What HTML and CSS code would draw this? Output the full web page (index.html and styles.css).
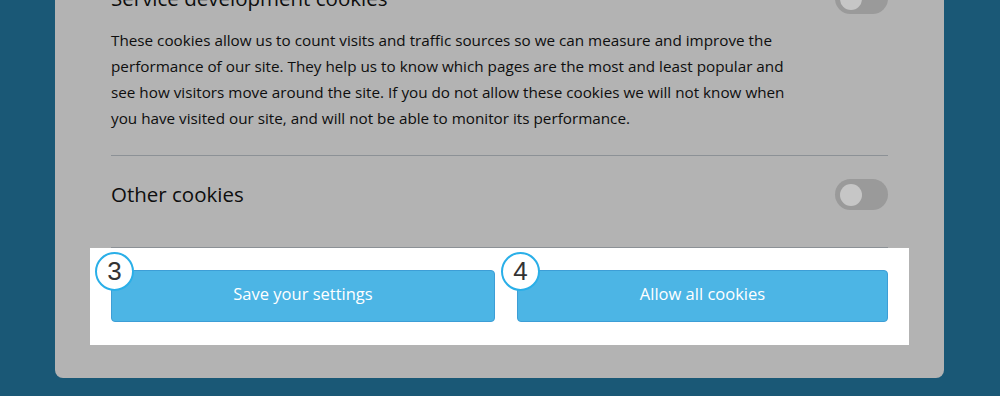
FILE: index.html
```html
<!DOCTYPE html>
<html lang="en">
<head>
<meta charset="utf-8">
<title>Cookie settings</title>
<link rel="stylesheet" href="styles.css">
</head>
<body>
<div class="panel">
  <section class="group">
    <div class="group-head">
      <h3 class="group-title">Service development cookies</h3>
      <span class="toggle"><span class="knob"></span></span>
    </div>
    <p class="group-text">These cookies allow us to count visits and traffic sources so we can measure and improve the performance of our site. They help us to know which pages are the most and least popular and see how visitors move around the site. If you do not allow these cookies we will not know when you have visited our site, and will not be able to monitor its performance.</p>
  </section>
  <section class="group group-last">
    <div class="group-head">
      <h3 class="group-title">Other cookies</h3>
      <span class="toggle"><span class="knob"></span></span>
    </div>
  </section>
  <div class="actions">
    <button class="btn btn-save"><span class="badge">3</span>Save your settings</button>
    <button class="btn btn-allow"><span class="badge">4</span>Allow all cookies</button>
  </div>
</div>
</body>
</html>
```
FILE: styles.css
```css
html, body {
  margin: 0;
  padding: 0;
}
body {
  background: #1a5876;
  width: 1000px;
  height: 396px;
  overflow: hidden;
  font-family: "Open Sans", Lato, sans-serif;
  color: #0e0e0e;
}
.panel {
  margin: -30px 0 0 55px;
  width: 889px;
  box-sizing: border-box;
  padding: 0 56px 33px;
  background: #b3b3b3;
  border-radius: 0 0 8px 8px;
}
.group {
  border-bottom: 1px solid #8c9196;
}
.group:first-child {
  padding-top: 13px;
  padding-bottom: 24px;
}
.group-head {
  display: flex;
  align-items: center;
  justify-content: space-between;
  height: 31px;
}
.group-title {
  margin: 0 0 2px;
  font-size: 20.5px;
  font-weight: 400;
}
.group-text {
  margin: 13px 0 0;
  max-width: 685px;
  font-size: 15.25px;
  line-height: 26px;
}
.group-last {
  padding: 23px 0 37px;
}
.toggle {
  width: 53px;
  height: 31px;
  border-radius: 16px;
  background: #9a9a9a;
  display: flex;
  align-items: center;
  padding-left: 5px;
  box-sizing: border-box;
}
.knob {
  width: 22px;
  height: 22px;
  border-radius: 50%;
  background: #c6c6c6;
}
.actions {
  margin: 0 -21px;
  padding: 22px 21px 23px;
  background: #fff;
  display: grid;
  grid-template-columns: 384px 1fr;
  gap: 22px;
}
.btn {
  position: relative;
  height: 52px;
  border: 1px solid #3d9ed6;
  border-radius: 4px;
  background: #4cb5e5;
  color: #fff;
  font-family: "Open Sans", Lato, sans-serif;
  font-size: 16.5px;
  padding: 0 0 6px;
}
.badge {
  position: absolute;
  left: -17px;
  top: -19px;
  width: 35px;
  height: 35px;
  border: 2px solid #2aafe8;
  border-radius: 50%;
  background: #fff;
  color: #333;
  font-family: "Liberation Sans", Arial, sans-serif;
  font-size: 26px;
  line-height: 35px;
  text-align: center;
}
```
